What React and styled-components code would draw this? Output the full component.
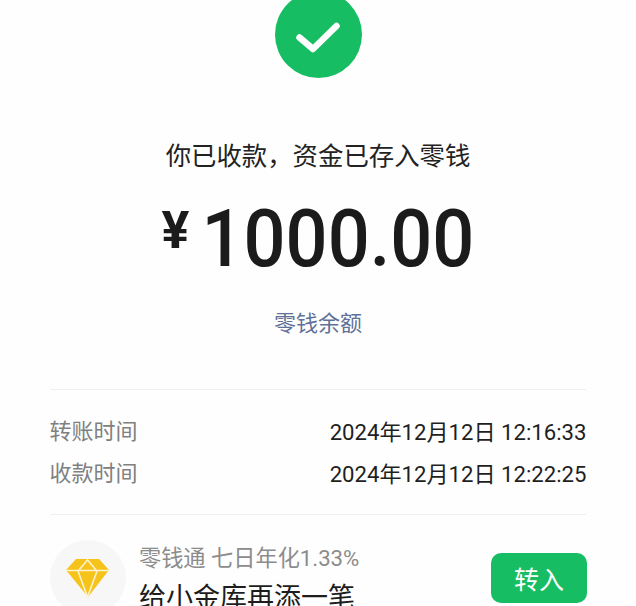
import React from "react";
import styled, { createGlobalStyle } from "styled-components";

const Global = createGlobalStyle`
  html, body { margin: 0; padding: 0; background: #fefefe; }
  body { font-family: "Roboto", "Noto Sans CJK SC", "Noto Sans", sans-serif; }
`;
const Page = styled.div`
  width: 636px; height: 606px; overflow: hidden; background: #fefefe;
  display: flex; flex-direction: column; align-items: center;
  & > * { flex: none; }
`;
const Circle = styled.div`
  width: 87px; height: 87px; margin-top: -9px; border-radius: 50%; background: #17bd63;
  display: flex; align-items: center; justify-content: center;
`;
const Title = styled.div`
  margin-top: 58px; font-size: 25.4px; line-height: 36px; color: #222; white-space: nowrap;
  font-family: "Noto Sans CJK SC", sans-serif;
`;
const Amount = styled.div`
  margin-top: 19px; height: 96px; display: flex; align-items: center; color: #1b1b1b;
  white-space: nowrap;
`;
const Yen = styled.span`
  font: 700 52px/1 "Roboto", sans-serif; margin-right: 12px; margin-top: -16px;
`;
const Digits = styled.span`
  font: 500 74px/1 "Roboto", sans-serif; transform: scaleY(1.07);
`;
const Balance = styled.div`
  margin-top: 19px; font-size: 22px; line-height: 30px; color: #5f7199;
  font-family: "Noto Sans CJK SC", sans-serif;
`;
const Divider = styled.div`
  width: 536px; height: 1px; background: #f0f0f0; margin-top: ${p => p.$top}px;
`;
const Rows = styled.div`
  width: 537px; margin-top: 27px; display: flex; flex-direction: column; gap: 12px;
`;
const Row = styled.div`
  display: flex; justify-content: space-between; height: 30px; line-height: 30px;
  font-size: 22px; white-space: nowrap;
`;
const Label = styled.span`color: #808080;`;
const Value = styled.span`color: #1f1f1f; font-size: 22.15px;`;
const Promo = styled.div`
  width: 537px; margin-left: 1px; margin-top: 25px; display: flex; align-items: flex-start;
`;
const Badge = styled.div`
  width: 76px; height: 76px; border-radius: 50%; background: #f7f7f7; flex: none;
  display: flex; align-items: center; justify-content: center;
`;
const PromoText = styled.div`
  margin-left: 13px; flex: 1; display: flex; flex-direction: column; white-space: nowrap;
`;
const PromoSub = styled.div`
  font-size: 22.2px; line-height: 30px; color: #8c8c8c; margin-top: 3px;
`;
const PromoMain = styled.div`
  font-size: 27px; line-height: 38px; color: #1d1d1d; margin-top: 4px;
  font-family: "Noto Sans CJK SC", sans-serif;
`;
const Button = styled.div`
  flex: none; width: 96px; height: 50px; border-radius: 10px; background: #17bd63; color: #fff;
  font-size: 25px; display: flex; align-items: center; justify-content: center; margin-top: 13px;
  font-family: "Noto Sans CJK SC", sans-serif;
`;

export default function App() {
  return (
    <Page>
      <Global />
      <Circle>
        <svg width="50" height="40" viewBox="0 0 50 40">
          <path d="M6.5 22.5 L20 34 L43.5 11" fill="none" stroke="#fff" strokeWidth="6.5" strokeLinecap="round" strokeLinejoin="round" />
        </svg>
      </Circle>
      <Title>你已收款，资金已存入零钱</Title>
      <Amount>
        <Yen>¥</Yen>
        <Digits>1000.00</Digits>
      </Amount>
      <Balance>零钱余额</Balance>
      <Divider $top={53} />
      <Rows>
        <Row><Label>转账时间</Label><Value>2024年12月12日 12:16:33</Value></Row>
        <Row><Label>收款时间</Label><Value>2024年12月12日 12:22:25</Value></Row>
      </Rows>
      <Divider $top={25} />
      <Promo>
        <Badge>
          <svg width="44" height="40" viewBox="0 0 44 40">
            <path d="M10 1 H33 L43 12 L22 39 L0 12 Z" fill="#f6c31a" />
            <path d="M0 12.5 H43 M13 12 L21.5 2 L30 12 M12 13 L21.5 39 L31 13" fill="none" stroke="#fdf3cf" strokeWidth="1.6" />
          </svg>
        </Badge>
        <PromoText>
          <PromoSub>零钱通 七日年化1.33%</PromoSub>
          <PromoMain>给小金库再添一笔</PromoMain>
        </PromoText>
        <Button>转入</Button>
      </Promo>
    </Page>
  );
}
